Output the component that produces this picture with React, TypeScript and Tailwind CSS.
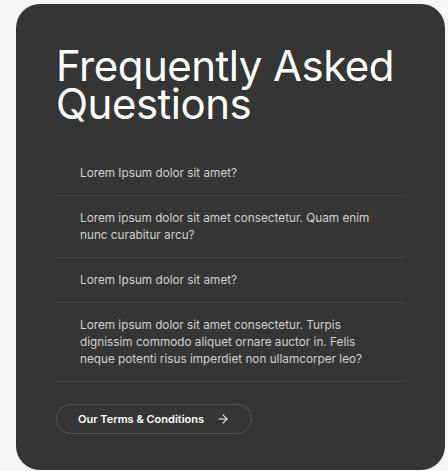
import { ArrowRight } from "lucide-react";

const faqs = [
  "Lorem Ipsum dolor sit amet?",
  "Lorem ipsum dolor sit amet consectetur. Quam enim nunc curabitur arcu?",
  "Lorem Ipsum dolor sit amet?",
  "Lorem ipsum dolor sit amet consectetur. Turpis dignissim commodo aliquet ornare auctor in. Felis neque potenti risus imperdiet non ullamcorper leo?",
];

export default function App() {
  return (
    <div className="min-h-[471px] bg-[#f7f7f7] pt-1 pl-4 pr-[3px] font-['Inter',sans-serif]">
      <section className="h-[466px] rounded-[24px] bg-[#353535] px-10 pt-[43px]">
        <h1 className="text-[42px] font-normal leading-[38px] tracking-[-0.5px] text-white">
          Frequently Asked
          <br />
          Questions
        </h1>
        <ul className="mt-[28px]">
          {faqs.map((q, i) => (
            <li
              key={i}
              className="border-b border-[#444444] py-[13.5px] pl-6 pr-6 text-[11.75px] leading-[17px] text-[#d2d2d2]"
            >
              {q}
            </li>
          ))}
        </ul>
        <button
          type="button"
          className="mt-[22px] flex h-[30px] items-center gap-3 rounded-full border border-[#555555] px-[21px] text-[11px] font-semibold text-white"
        >
          Our Terms &amp; Conditions
          <ArrowRight size={14} strokeWidth={1.75} aria-hidden="true" />
        </button>
      </section>
    </div>
  );
}
